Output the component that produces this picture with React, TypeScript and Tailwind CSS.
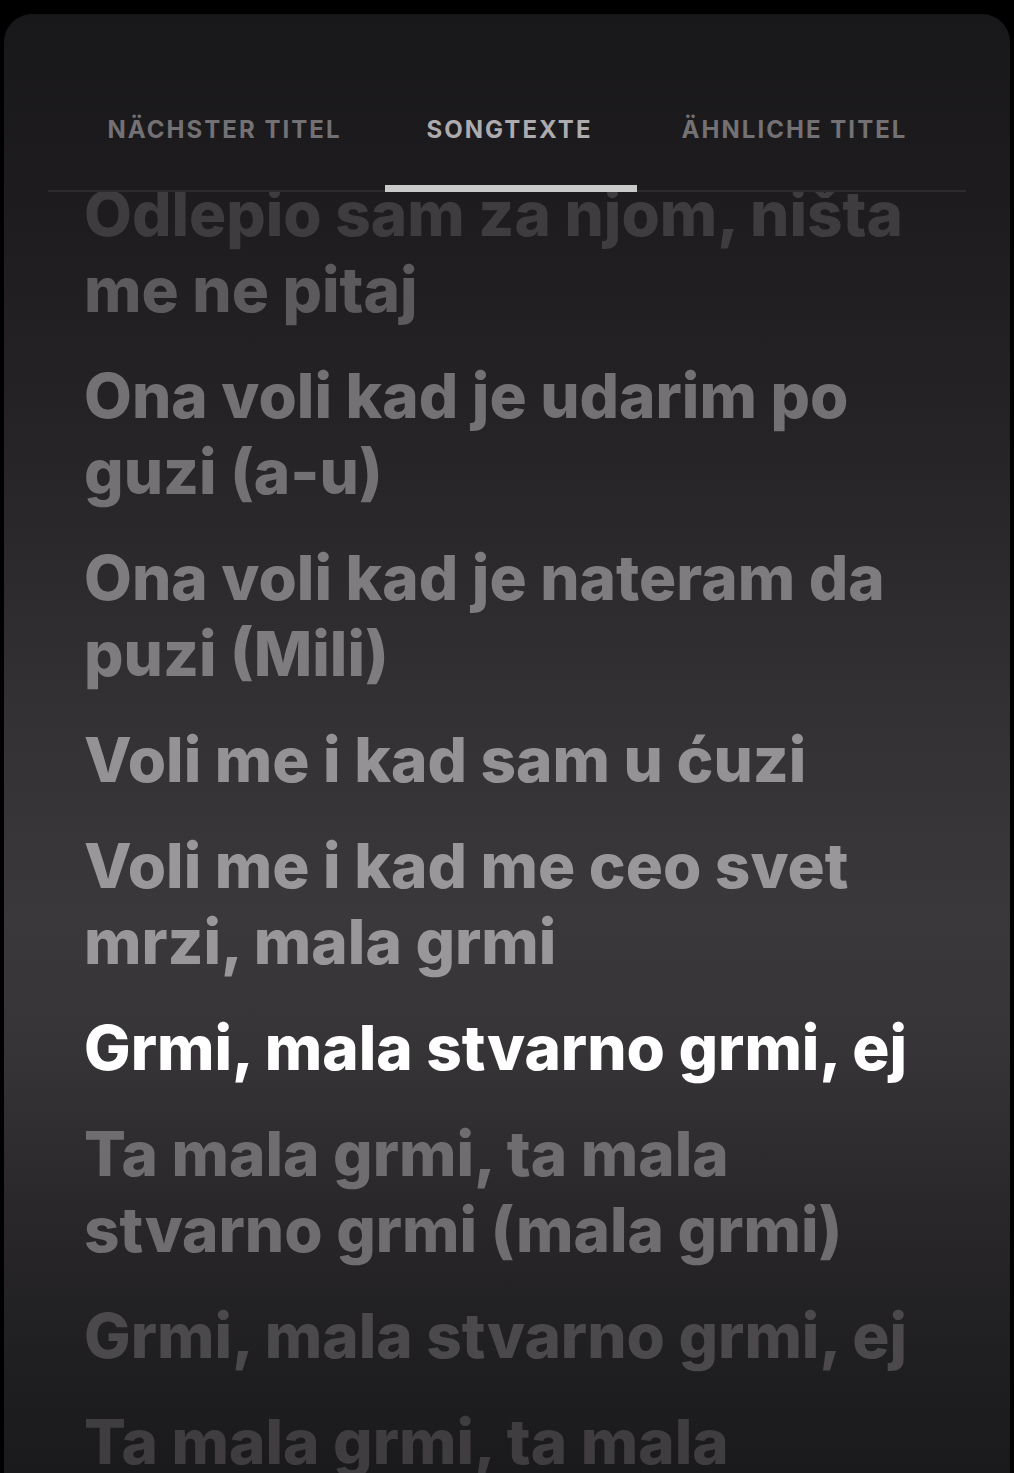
import React from 'react';

type Stanza = { lines: string[]; color: string };

const lyrics: Stanza[] = [
  { lines: ['Ona voli kad je udarim po', 'guzi (a-u)'], color: 'text-[#737174]' },
  { lines: ['Ona voli kad je nateram da', 'puzi (Mili)'], color: 'text-[#7e7c7f]' },
  { lines: ['Voli me i kad sam u ćuzi'], color: 'text-[#949295]' },
  { lines: ['Voli me i kad me ceo svet', 'mrzi, mala grmi'], color: 'text-[#99979a]' },
  { lines: ['Grmi, mala stvarno grmi, ej'], color: 'text-white' },
  { lines: ['Ta mala grmi, ta mala', 'stvarno grmi (mala grmi)'], color: 'text-[#6f6d70]' },
  { lines: ['Grmi, mala stvarno grmi, ej'], color: 'text-[#4b494c]' },
  { lines: ['Ta mala grmi, ta mala'], color: 'text-[#3f3d40]' },
];

const tabs = [
  { label: 'NÄCHSTER TITEL', active: false },
  { label: 'SONGTEXTE', active: true },
  { label: 'ÄHNLICHE TITEL', active: false },
];

export default function App() {
  return (
    <div className="w-full h-[1473px] bg-black pt-[14px] px-[4px] overflow-hidden font-['Inter',sans-serif]">
      <div className="h-full rounded-t-[28px] flex flex-col overflow-hidden bg-[linear-gradient(to_bottom,#18171a_0%,#1e1c1f_14%,#262427_30%,#333134_48%,#3a383b_62%,#363437_71%,#29272a_82%,#1f1e21_92%,#1a191c_100%)]">
        {/* tab bar */}
        <div className="pt-[103px] px-[44px]">
          <div className="grid grid-cols-[285px_285px_285px] ml-[34px]">
            {tabs.map((t) => (
              <div
                key={t.label}
                className={`text-center text-[24px] font-bold tracking-[0.085em] leading-[26px] whitespace-nowrap ${
                  t.active ? 'text-[#adabae]' : 'text-[#737174]'
                }`}
              >
                {t.label}
              </div>
            ))}
          </div>
          <div className="relative mt-[47px] h-[2px] bg-[#2c2b2e]">
            <div className="absolute left-[337px] bottom-0 w-[252px] h-[7px] bg-[#c9c9c9]" />
          </div>
        </div>

        {/* lyrics */}
        <div className="flex-1 overflow-hidden pl-[80px]">
          <div className="-mt-[16px] flex flex-col gap-[30px] font-extrabold text-[62px] leading-[76px] tracking-[0em]">
            <div>
              <div className="whitespace-nowrap text-[#3e3c3f]">Odlepio sam za njom, ništa</div>
              <div className="whitespace-nowrap text-[#5c5a5d]">me ne pitaj</div>
            </div>
            {lyrics.map((s, i) => (
              <div key={i} className={s.color}>
                {s.lines.map((l) => (
                  <div key={l} className="whitespace-nowrap">
                    {l}
                  </div>
                ))}
              </div>
            ))}
          </div>
        </div>
      </div>
    </div>
  );
}
